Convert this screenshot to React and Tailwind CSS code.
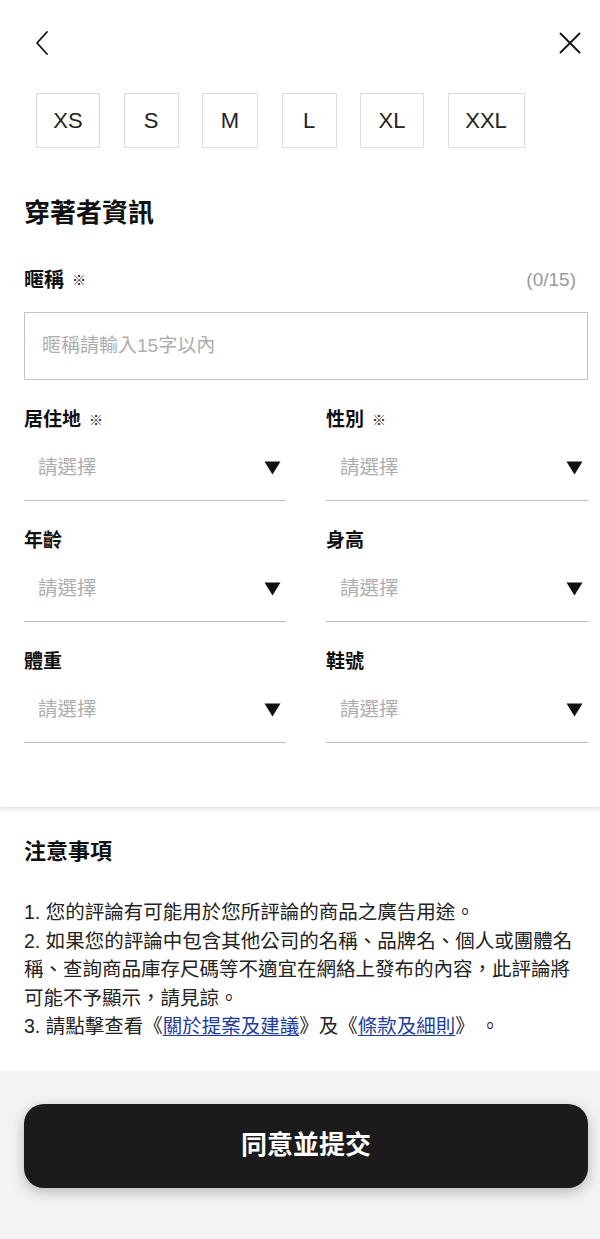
import React from "react";

const sizes = [
  { label: "XS", w: "w-[64px]" },
  { label: "S", w: "w-[55px]" },
  { label: "M", w: "w-[56px]" },
  { label: "L", w: "w-[55px]" },
  { label: "XL", w: "w-[64px]" },
  { label: "XXL", w: "w-[77px]" },
];

const SelectField = ({ label, required }) => (
  <div>
    <div className="h-[28px] flex items-center text-[19px] font-bold text-[#111]">
      {label}
      {required && <span className="ml-[8px] text-[14px] font-bold">※</span>}
    </div>
    <div className="mt-[14px] pb-[12px] border-b-[1.5px] border-[#bdbdbd]">
      <div className="h-[40px] flex items-center justify-between pl-[14px] pr-[5px]">
        <span className="text-[19.5px] text-[#adadad]">請選擇</span>
        <svg width="17" height="14" viewBox="0 0 17 14">
          <path d="M0.5 0.5 H16.5 L8.5 13.5 Z" fill="#111" />
        </svg>
      </div>
    </div>
  </div>
);

export default function App() {
  return (
    <div
      className="w-[600px] min-h-[1239px] bg-[#f3f3f3] text-[#111]"
      style={{ fontFamily: '"Liberation Sans", "Noto Sans CJK TC", sans-serif' }}
    >
      {/* form section */}
      <div className="relative z-10 bg-white pb-[64px] shadow-[0_2px_4px_rgba(0,0,0,0.13)]">
        <div className="h-[86px] flex items-center justify-between pl-[35px] pr-[19px]">
          <svg width="14" height="26" viewBox="0 0 14 26" fill="none">
            <path d="M12 2 L2 13 L12 24" stroke="#111" strokeWidth="1.8" strokeLinecap="round" strokeLinejoin="round" />
          </svg>
          <svg width="22" height="22" viewBox="0 0 22 22" fill="none">
            <path d="M1.5 1.5 L20.5 20.5 M20.5 1.5 L1.5 20.5" stroke="#111" strokeWidth="1.8" strokeLinecap="round" />
          </svg>
        </div>

        <div className="mt-[7px] pl-[36px] flex gap-[23.5px]">
          {sizes.map((s) => (
            <div
              key={s.label}
              className={`${s.w} h-[55px] border-[1.5px] border-[#dedede] flex items-center justify-center text-[22px] text-[#222]`}
            >
              {s.label}
            </div>
          ))}
        </div>

        <div className="pl-6 pr-3">
          <h1 className="mt-[48px] text-[26px] leading-[34px] font-bold">穿著者資訊</h1>

          <div className="mt-[36px] h-[28px] flex items-center justify-between">
            <div className="flex items-center text-[20px] font-bold">
              暱稱<span className="ml-[8px] text-[14px] font-bold">※</span>
            </div>
            <span className="mr-[12px] text-[19px] text-[#9a9a9a]">(0/15)</span>
          </div>

          <div className="mt-[18px] h-[68px] border-[1.5px] border-[#c2c2c2] flex items-center pl-[17px]">
            <span className="text-[19px] text-[#adadad]">暱稱請輸入15字以內</span>
          </div>

          <div className="mt-[26px] grid grid-cols-2 gap-x-[40px] gap-y-[26px]">
            <SelectField label="居住地" required />
            <SelectField label="性別" required />
            <SelectField label="年齡" />
            <SelectField label="身高" />
            <SelectField label="體重" />
            <SelectField label="鞋號" />
          </div>
        </div>
      </div>

      {/* notice section */}
      <div className="bg-white px-6 pt-[30px] pb-[30px]">
        <h2 className="text-[22px] leading-[30px] font-bold">注意事項</h2>
        <div className="mt-[31px] text-[19.5px] leading-[28.5px] text-[#222]">
          <p>1. 您的評論有可能用於您所評論的商品之廣告用途。</p>
          <p>
            2. 如果您的評論中包含其他公司的名稱、品牌名、個人或團體名稱、查詢商品庫存尺碼等不適宜在網絡上發布的內容，此評論將可能不予顯示，請見諒。
          </p>
          <p>
            3. 請點擊查看《<a className="text-[#1f3c9c] underline underline-offset-2">關於提案及建議</a>》及《
            <a className="text-[#1f3c9c] underline underline-offset-2">條款及細則</a>》 。
          </p>
        </div>
      </div>

      {/* footer */}
      <div className="pl-6 pr-3 pt-[33px] pb-[50px]">
        <button className="w-full h-[84px] rounded-[20px] bg-[#1b1b1b] text-white text-[26px] font-bold shadow-[0_4px_14px_rgba(0,0,0,0.25)]">
          同意並提交
        </button>
      </div>
    </div>
  );
}
